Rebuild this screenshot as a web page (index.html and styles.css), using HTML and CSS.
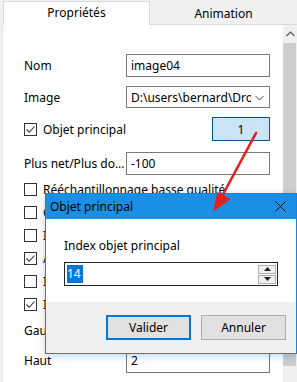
FILE: index.html
```html
<!DOCTYPE html>
<html lang="fr">
<head>
  <meta charset="utf-8" />
  <title>Propriétés – Objet principal</title>
  <link rel="stylesheet" href="styles.css">
</head>
<body>
  <div class="window">
    <!-- Onglets -->
    <div class="tabs">
      <div class="tab active">Propriétés</div>
      <div class="tab">Animation</div>
    </div>

    <div class="content">
      <div class="form">
        <div class="row r-nom">
          <label>Nom</label>
          <div class="field">image04</div>
        </div>
        <div class="row r-image">
          <label>Image</label>
          <div class="field combo">
            <span class="combo-text">D:\users\bernard\Dropbox\images</span>
            <svg class="chev" width="9" height="6" viewBox="0 0 9 6"><path d="M0.5 1 L4.5 5 L8.5 1" fill="none" stroke="#444" stroke-width="1"/></svg>
          </div>
        </div>
        <div class="row r-objet">
          <span class="check on"><svg width="11" height="11" viewBox="0 0 11 11"><path d="M1.5 5.5 L4.2 8.3 L9.5 2.5" fill="none" stroke="#333" stroke-width="1.1"/></svg></span>
          <span class="check-label">Objet principal</span>
          <button class="btn-index">1</button>
        </div>
        <div class="row r-plus">
          <label>Plus net/Plus do...</label>
          <div class="field">-100</div>
        </div>
        <div class="row cb first"><span class="check"></span><span class="check-label">Rééchantillonnage basse qualité</span></div>
        <div class="row cb"><span class="check"></span><span class="check-label">Conserver les proportions</span></div>
        <div class="row cb"><span class="check"></span><span class="check-label">Inverser horizontalement</span></div>
        <div class="row cb"><span class="check on"><svg width="11" height="11" viewBox="0 0 11 11"><path d="M1.5 5.5 L4.2 8.3 L9.5 2.5" fill="none" stroke="#333" stroke-width="1.1"/></svg></span><span class="check-label">Afficher l'image</span></div>
        <div class="row cb"><span class="check"></span><span class="check-label">Inverser verticalement</span></div>
        <div class="row cb"><span class="check on"><svg width="11" height="11" viewBox="0 0 11 11"><path d="M1.5 5.5 L4.2 8.3 L9.5 2.5" fill="none" stroke="#333" stroke-width="1.1"/></svg></span><span class="check-label">Interpolation</span></div>
        <div class="row r-gauche">
          <label>Gauche</label>
          <div class="field">12</div>
        </div>
        <div class="row r-haut">
          <label>Haut</label>
          <div class="field">2</div>
        </div>
      </div>
      <div class="scrollbar">
        <div class="sb-arrow"><svg width="9" height="6" viewBox="0 0 9 6"><path d="M0.5 5 L4.5 1 L8.5 5" fill="none" stroke="#555" stroke-width="1.2"/></svg></div>
        <div class="sb-thumb"></div>
      </div>
    </div>

    <!-- Boîte de dialogue -->
    <div class="dialog">
      <div class="dlg-title">
        <span>Objet principal</span>
        <svg class="dlg-close" width="11" height="11" viewBox="0 0 11 11"><path d="M0.5 0.5 L10.5 10.5 M10.5 0.5 L0.5 10.5" stroke="#111" stroke-width="1"/></svg>
      </div>
      <div class="dlg-body">
        <div class="dlg-label">Index objet principal</div>
        <div class="spin">
          <span class="sel">14</span>
          <div class="spin-btns">
            <div class="spin-btn"><svg width="7" height="4" viewBox="0 0 7 4"><path d="M0 4 L3.5 0 L7 4 Z" fill="#222"/></svg></div>
            <div class="spin-btn"><svg width="7" height="4" viewBox="0 0 7 4"><path d="M0 0 L3.5 4 L7 0 Z" fill="#222"/></svg></div>
          </div>
        </div>
      </div>
      <div class="dlg-footer">
        <button class="btn default">Valider</button>
        <button class="btn">Annuler</button>
      </div>
    </div>

    <!-- Flèche d'annotation -->
    <svg class="arrow" width="297" height="382" viewBox="0 0 297 382">
      <line x1="256" y1="133" x2="220" y2="200" stroke="#e3211b" stroke-width="2.6" stroke-linecap="round"/>
      <polygon points="213,212 217.5,192 230.5,199" fill="#e3211b"/>
    </svg>
  </div>
</body>
</html>
```

FILE: styles.css
```css
*{box-sizing:border-box;margin:0;padding:0}
body{
  width:297px;height:382px;overflow:hidden;
  font-family:'Noto Sans','Liberation Sans',Arial,sans-serif;
  font-size:12px;color:#000;background:#f0f0f0;
}
.window{position:relative;width:297px;height:382px;overflow:hidden}

/* —— Onglets —— */
.tabs{display:flex;height:25px;padding:1px 0 0 3px}
.tab{
  flex:1;display:flex;align-items:center;justify-content:center;
  border-bottom:1px solid #d9d9d9;background:#f0f0f0;padding-top:2px;
}
.tab.active{
  flex:0 0 147px;background:#fff;border:1px solid #d9d9d9;border-bottom:none;
  padding-top:0;padding-bottom:2px;
}

.content{display:flex;height:357px;background:#fff;margin-left:2px;border-left:1px solid #e4e8ee}

/* —— Formulaire —— */
.form{flex:1;display:flex;flex-direction:column;padding:29px 0 0 21px}
.row{display:flex;align-items:center;height:23px}
.row label{width:102px;white-space:nowrap}
.field{
  width:144px;height:23px;border:1px solid #7a7a7a;background:#fff;
  padding:0 0 0 4px;display:flex;align-items:center;overflow:hidden;white-space:nowrap;
}
.combo{position:relative;height:22px}
.combo-text{overflow:hidden;width:120px}
.chev{position:absolute;right:5px;top:8px}

.r-image{margin-top:9px;height:22px}
.r-objet{margin-top:9px;height:24px}
.r-plus{margin-top:11px;height:22px}
.cb.first{margin-top:4px}
.r-gauche{margin-top:2px;height:24px}
.r-haut{margin-top:6px;height:25px}
.r-haut .field{height:25px}

.check{
  width:13px;height:13px;border:1px solid #333;background:#fff;
  display:flex;align-items:center;justify-content:center;flex:none;
}
.check-label{margin-left:6px;white-space:nowrap}
.btn-index{
  margin-left:auto;margin-right:13px;width:58px;height:24px;
  background:#cce4f7;border:1px solid #005499;font:inherit;color:#000;
}

/* —— Barre de défilement —— */
.scrollbar{width:14px;flex:none;background:#f0f0f0;display:flex;flex-direction:column}
.sb-arrow{height:18px;display:flex;align-items:center;justify-content:center}
.sb-thumb{flex:1;background:#cdcdcd;margin:0 1px 16px 0}

/* —— Dialogue —— */
.dialog{
  position:absolute;left:45px;top:193px;width:252px;height:161px;
  border:1px solid #1883d7;background:#fff;
  display:flex;flex-direction:column;
  box-shadow:0 2px 8px rgba(0,0,0,.18);
}
.dlg-title{
  height:25px;background:#1a8fe3;display:flex;align-items:center;
  justify-content:space-between;padding:0 10px 0 4px;flex:none;
}
.dlg-body{flex:1;padding:18px 18px 0 18px}
.dlg-label{margin-bottom:8px}
.spin{
  height:24px;border:1px solid #222;display:flex;align-items:center;
  justify-content:space-between;padding:0 1px 0 2px;
}
.sel{background:#0078d7;color:#fff;padding:0 2px 0 0;line-height:18px}
.spin-btns{display:flex;flex-direction:column;gap:1px}
.spin-btn{
  width:18px;height:9px;border:1px solid #adadad;background:#f0f0f0;
  display:flex;align-items:center;justify-content:center;
}
.dlg-footer{
  height:51px;flex:none;background:#f0f0f0;display:flex;
  justify-content:flex-end;align-items:center;gap:10px;padding:0 10px 0 0;
}
.btn{
  width:85px;height:25px;background:#e1e1e1;border:1px solid #adadad;
  font:inherit;color:#000;
}
.btn.default{border:2px solid #0078d7}

.arrow{position:absolute;left:0;top:0;pointer-events:none}
```
